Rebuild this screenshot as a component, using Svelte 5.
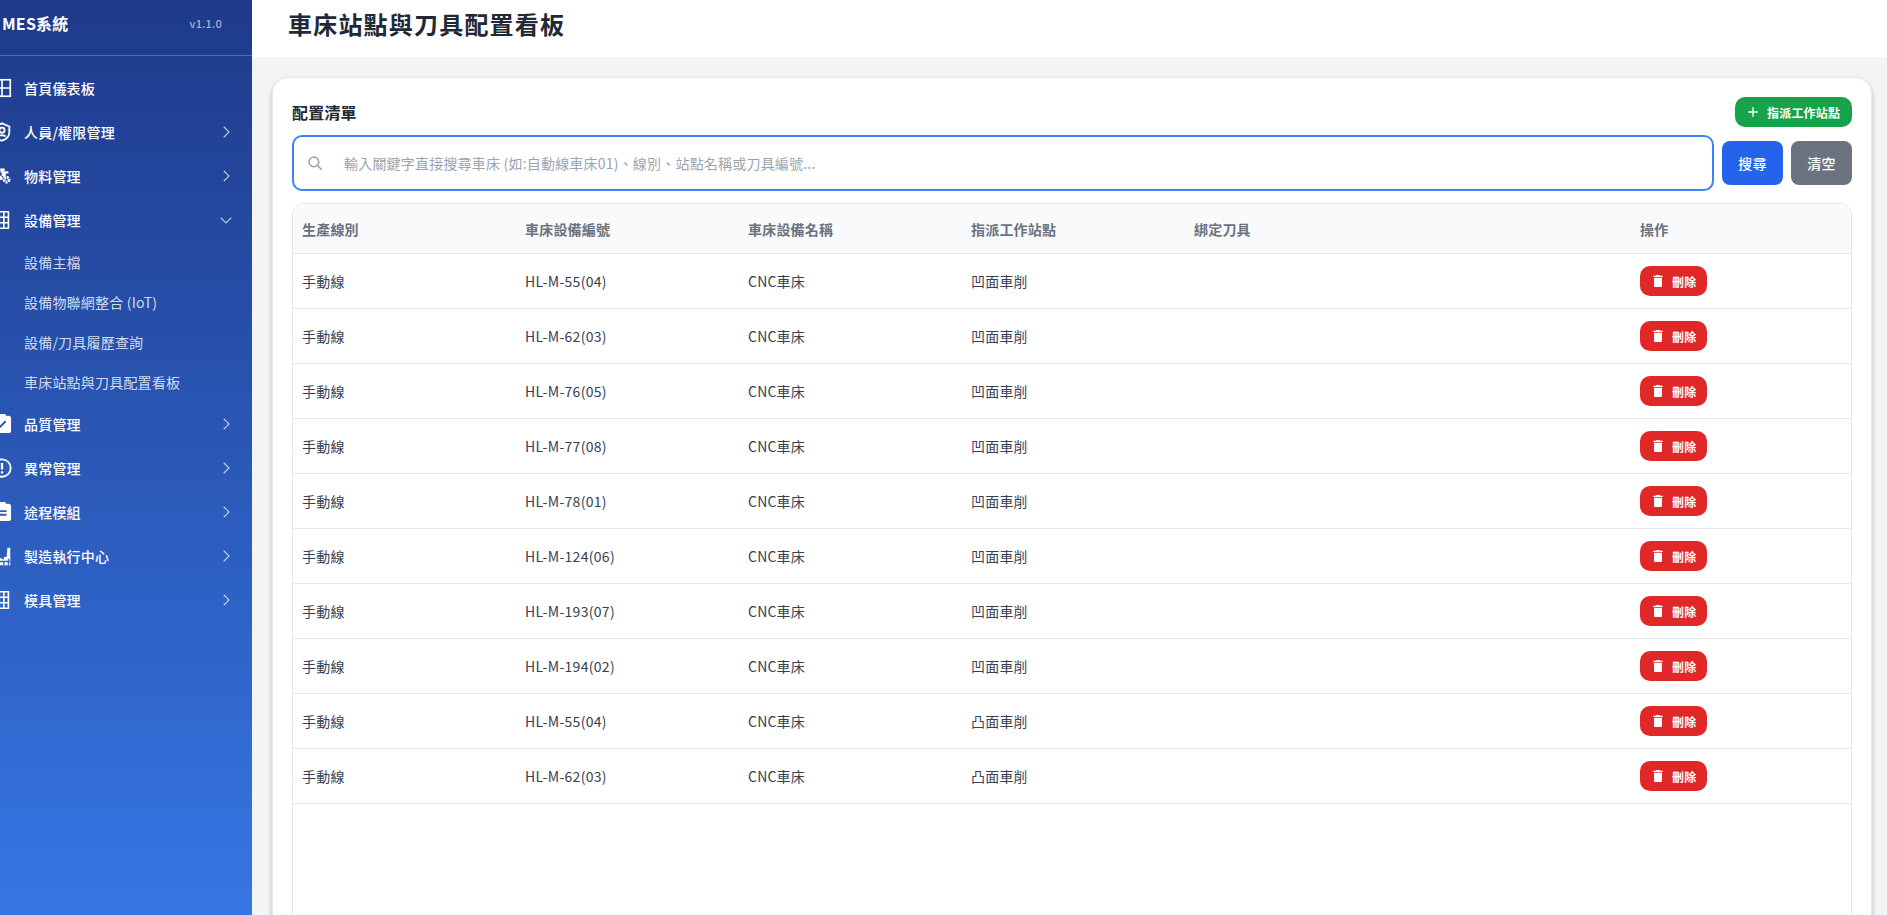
<script lang="ts">
  const nav = [
    { label: '首頁儀表板', icon: 'dash' },
    { label: '人員/權限管理', icon: 'shield', arrow: 'right' },
    { label: '物料管理', icon: 'gear', arrow: 'right' },
    { label: '設備管理', icon: 'bldg', arrow: 'down', subs: ['設備主檔', '設備物聯網整合 (IoT)', '設備/刀具履歷查詢', '車床站點與刀具配置看板'] },
    { label: '品質管理', icon: 'check', arrow: 'right' },
    { label: '異常管理', icon: 'alert', arrow: 'right' },
    { label: '途程模組', icon: 'clip', arrow: 'right' },
    { label: '製造執行中心', icon: 'factory', arrow: 'right' },
    { label: '模具管理', icon: 'bldg', arrow: 'right' },
  ];

  const rows = [
    ['HL-M-55(04)', '凹面車削'],
    ['HL-M-62(03)', '凹面車削'],
    ['HL-M-76(05)', '凹面車削'],
    ['HL-M-77(08)', '凹面車削'],
    ['HL-M-78(01)', '凹面車削'],
    ['HL-M-124(06)', '凹面車削'],
    ['HL-M-193(07)', '凹面車削'],
    ['HL-M-194(02)', '凹面車削'],
    ['HL-M-55(04)', '凸面車削'],
    ['HL-M-62(03)', '凸面車削'],
  ];
</script>

<div class="page">
  <aside class="sidebar">
    <div class="brand">
      <span class="brand-name">MES系統</span>
      <span class="version">v1.1.0</span>
    </div>
    <nav class="nav">
      {#each nav as item}
        <div class="nav-item">
          <svg class="nav-icon" viewBox="0 0 24 24" fill="none" stroke="currentColor" stroke-width="1.8">
            {#if item.icon === 'dash'}
              <rect x="3" y="3" width="18" height="18" /><path d="M12 3v18M3 12h18" />
            {:else if item.icon === 'shield'}
              <path d="M12 2.500 20 6v6c0 5-3.500 8-8 9.500C7.500 20 4 17 4 12V6z" stroke-width="2" /><circle cx="12" cy="10" r="2.800" stroke-width="2" /><path d="M8 17c1-2 7-2 8 0" stroke-width="2" />
            {:else if item.icon === 'gear'}
              <circle cx="10" cy="10" r="4" stroke-width="4.500" stroke-dasharray="2.600 1.200" />
              <circle cx="17" cy="16" r="2.600" stroke-width="3.200" stroke-dasharray="2 .8" />
              <path d="M10 5h5M12 8h7" stroke-width="2.500" />
            {:else if item.icon === 'bldg'}
              <path d="M3 3h16v18H3zM9 3v18M14 3v18M3 9h16M3 15h16" />
            {:else if item.icon === 'check'}
              <rect x="4" y="4" width="17" height="17" rx="2" fill="currentColor" /><rect x="9" y="2" width="6" height="4" fill="currentColor" /><path d="m8 17 8-8" stroke="#2a54ae" stroke-width="2" />
            {:else if item.icon === 'alert'}
              <circle cx="12" cy="12" r="9.500" stroke-width="2" /><path d="M12 6.500v7M12 15.500v2.500" stroke-width="2.500" />
            {:else if item.icon === 'clip'}
              <rect x="4" y="4" width="17" height="17" rx="2" fill="currentColor" /><rect x="9" y="2" width="6" height="4" fill="currentColor" /><path d="M8 11h9M8 15h9" stroke="#2d5cbc" stroke-width="2" />
            {:else if item.icon === 'factory'}
              <path d="M2 22V13l6 3v-3l6 3v-3h3l1-10h3v19z" fill="currentColor" stroke="none" /><path d="M2 18h19M14 18v4M19 15v7" stroke="#2e5fc4" stroke-width="1.400" />
            {/if}
          </svg>
          <span class="nav-label">{item.label}</span>
          {#if item.arrow}
            <svg class="chev" viewBox="0 0 24 24" fill="none" stroke="currentColor" stroke-width="1.500">
              {#if item.arrow === 'right'}
                <path d="m9 5 7 7-7 7" />
              {:else}
                <path d="m5 9 7 7 7-7" />
              {/if}
            </svg>
          {/if}
        </div>
        {#if item.subs}
          <div class="subs">
            {#each item.subs as sub}
              <div class="sub-item">{sub}</div>
            {/each}
          </div>
        {/if}
      {/each}
    </nav>
  </aside>

  <main class="main">
    <header class="topbar">
      <h1>車床站點與刀具配置看板</h1>
    </header>
    <div class="content">
      <section class="card">
        <div class="card-head">
          <h2>配置清單</h2>
          <button class="btn-add">
            <svg viewBox="0 0 24 24" fill="none" stroke="currentColor" stroke-width="2"><path d="M12 5v14M5 12h14" /></svg>
            指派工作站點
          </button>
        </div>
        <div class="search-row">
          <div class="search-box">
            <svg viewBox="0 0 24 24" fill="none" stroke="currentColor" stroke-width="2"><circle cx="10.500" cy="10.500" r="6.500" /><path d="m15.500 15.500 5.500 5.500" /></svg>
            <span class="placeholder">輸入關鍵字直接搜尋車床 (如:自動線車床01)、線別、站點名稱或刀具編號...</span>
          </div>
          <button class="btn btn-search">搜尋</button>
          <button class="btn btn-clear">清空</button>
        </div>
        <div class="table">
          <div class="tr th">
            <div>生產線別</div>
            <div>車床設備編號</div>
            <div>車床設備名稱</div>
            <div>指派工作站點</div>
            <div>綁定刀具</div>
            <div>操作</div>
          </div>
          {#each rows as row}
            <div class="tr">
              <div>手動線</div>
              <div class="code">{row[0]}</div>
              <div>CNC車床</div>
              <div>{row[1]}</div>
              <div></div>
              <div>
                <button class="btn-del">
                  <svg viewBox="0 0 24 24" fill="currentColor"><path d="M6 19c0 1.100.9 2 2 2h8c1.100 0 2-.9 2-2V7H6zM19 4h-3.500l-1-1h-5l-1 1H5v2h14z" /></svg>
                  刪除
                </button>
              </div>
            </div>
          {/each}
        </div>
      </section>
    </div>
  </main>
</div>

<style>
  :global(body) {
    margin: 0;
    overflow: hidden;
    font-family: "Noto Sans CJK TC", "Noto Sans", sans-serif;
    letter-spacing: 0.2px;
  }

  .page {
    display: flex;
    height: 915px;
    overflow: hidden;
  }

  .sidebar {
    width: 252px;
    flex-shrink: 0;
    background: linear-gradient(180deg, #1e3a8a 0, #3b82f6 1100px);
    color: #fff;
    overflow: hidden;
  }

  .brand {
    height: 55px;
    box-sizing: content-box;
    display: flex;
    align-items: center;
    border-bottom: 1px solid rgba(255, 255, 255, 0.25);
    padding: 0 30px 0 2px;
    justify-content: space-between;
  }

  .brand > span {
    margin-bottom: 10px;
  }

  .brand-name {
    font-size: 16px;
    font-weight: 700;
  }

  .version {
    font-size: 11px;
    color: rgba(255, 255, 255, 0.6);
    font-weight: 500;
  }

  .nav {
    padding-top: 10px;
  }

  .nav-item {
    height: 44px;
    display: flex;
    align-items: center;
    font-size: 14px;
    font-weight: 500;
  }

  .nav-icon {
    width: 22px;
    height: 22px;
    flex-shrink: 0;
    margin-left: -9px;
    margin-right: 11px;
  }

  .nav-label {
    flex: 1;
  }

  .chev {
    width: 18px;
    height: 18px;
    margin-right: 17px;
    color: rgba(255, 255, 255, 0.7);
  }

  .sub-item {
    height: 40px;
    display: flex;
    align-items: center;
    padding-left: 24px;
    font-size: 14px;
    color: rgba(255, 255, 255, 0.8);
  }

  .main {
    flex: 1;
    min-width: 0;
    display: flex;
    flex-direction: column;
    background: #f3f4f6;
  }

  .topbar {
    height: 57px;
    flex-shrink: 0;
    background: #fff;
    padding-left: 36px;
    display: flex;
    align-items: center;
  }

  h1 {
    margin: 0 0 11px;
    font-size: 24px;
    font-weight: 700;
    letter-spacing: 1.2px;
    color: #1f2937;
  }

  .content {
    padding: 20px 15px 0 20px;
  }

  .card {
    background: #fff;
    border: 1px solid #e5e7eb;
    border-radius: 16px;
    box-shadow: 0 3px 5px rgba(0, 0, 0, 0.22);
    padding: 19px 19px 0;
    height: 900px;
  }

  .card-head {
    display: flex;
    justify-content: space-between;
    align-items: center;
    height: 30px;
  }

  h2 {
    margin: 0;
    font-size: 16px;
    font-weight: 700;
    color: #1f2937;
  }

  .btn-add {
    display: flex;
    align-items: center;
    gap: 6px;
    width: 117px;
    height: 30px;
    padding: 0 0 0 10px;
    border: 0;
    border-radius: 10px;
    background: #16a34a;
    color: #fff;
    font: inherit;
    font-size: 12px;
    font-weight: 700;
    letter-spacing: 0.2px;
  }

  .btn-add svg {
    width: 16px;
    height: 16px;
  }

  .search-row {
    display: flex;
    align-items: center;
    gap: 8px;
    margin-top: 8px;
  }

  .search-box {
    flex: 1;
    height: 52px;
    border: 2px solid #3b82f6;
    border-radius: 10px;
    display: flex;
    align-items: center;
    padding-left: 12px;
    gap: 20px;
  }

  .search-box svg {
    width: 18px;
    height: 18px;
    color: #9ca3af;
  }

  .placeholder {
    font-size: 14px;
    color: #9ca3af;
  }

  .btn {
    width: 61px;
    height: 44px;
    border: 0;
    border-radius: 8px;
    color: #fff;
    font: inherit;
    font-size: 14px;
    font-weight: 500;
    letter-spacing: 0.2px;
  }

  .btn-search {
    background: #2563eb;
  }

  .btn-clear {
    background: #6b7280;
  }

  .table {
    margin-top: 12px;
    border: 1px solid #e5e7eb;
    border-radius: 12px 12px 0 0;
    height: 800px;
    overflow: hidden;
  }

  .tr {
    display: grid;
    grid-template-columns: repeat(4, 223px) 446px 1fr;
    height: 55px;
    box-sizing: border-box;
    border-bottom: 1px solid #e5e7eb;
    font-size: 14px;
    color: #374151;
    align-items: center;
  }

  .tr > div {
    padding-left: 9px;
  }

  .tr > .code {
    letter-spacing: 0.3px;
  }

  .th {
    height: 50px;
    background: #f9fafb;
    color: #6b7280;
    font-weight: 700;
  }

  .btn-del {
    display: flex;
    align-items: center;
    gap: 6px;
    width: 67px;
    height: 30px;
    padding: 0 0 0 10px;
    border: 0;
    border-radius: 10px;
    background: #e02828;
    color: #fff;
    font: inherit;
    font-size: 12px;
    font-weight: 700;
    letter-spacing: 0.2px;
  }

  .btn-del svg {
    width: 16px;
    height: 16px;
  }
</style>
